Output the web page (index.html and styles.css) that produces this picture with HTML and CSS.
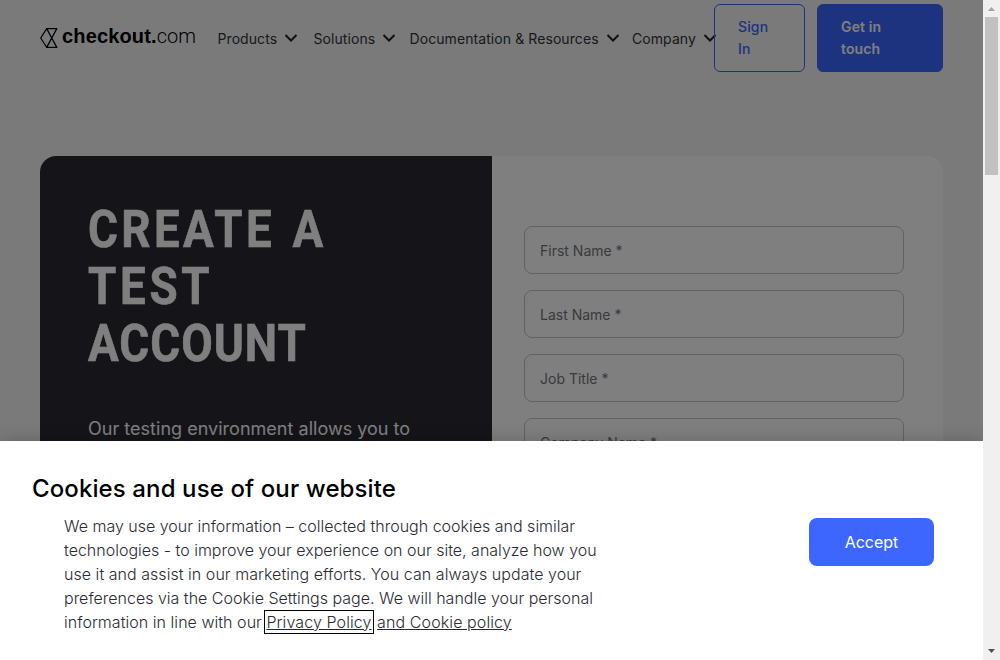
FILE: index.html
```html
<!DOCTYPE html>
<html lang="en">
<head>
<meta charset="utf-8">
<title>Create a test account | Checkout.com</title>
<link rel="stylesheet" href="styles.css">
</head>
<body>
<div class="page">
  <header class="header">
    <a class="logo">
      <svg class="logo-mark" width="18" height="20" viewBox="0 0 18 20" fill="none" stroke="#000" stroke-width="1.2" stroke-linejoin="round"><path d="M6.7 .6H16.8L6.7 19.4H16.8L6.7 .6L.7 10L6.7 19.4"/></svg>
      <span class="logo-text"><b>checkout.</b><span class="logo-com">com</span></span>
    </a>
    <nav class="nav">
      <a class="nav-item nav-products"><span>Products</span><svg class="chevron" viewBox="0 0 12 8"><path d="M.5 1L6 6.500L11.500 1"/></svg></a>
      <a class="nav-item nav-solutions"><span>Solutions</span><svg class="chevron" viewBox="0 0 12 8"><path d="M.5 1L6 6.500L11.500 1"/></svg></a>
      <a class="nav-item nav-docs"><span>Documentation &amp; Resources</span><svg class="chevron" viewBox="0 0 12 8"><path d="M.5 1L6 6.500L11.500 1"/></svg></a>
      <a class="nav-item nav-company"><span>Company</span><svg class="chevron" viewBox="0 0 12 8"><path d="M.5 1L6 6.500L11.500 1"/></svg></a>
    </nav>
    <div class="actions">
      <a class="btn btn-outline">Sign<br>In</a>
      <a class="btn btn-solid">Get in<br>touch</a>
    </div>
  </header>
  <main class="card">
    <section class="intro">
      <h1 class="title"><span class="line line-1">CREATE A</span><span class="line line-2">TEST</span><span class="line line-3">ACCOUNT</span></h1>
      <p class="lead">Our testing environment allows you to</p>
    </section>
    <form class="form">
      <div class="field">First Name *</div>
      <div class="field">Last Name *</div>
      <div class="field">Job Title *</div>
      <div class="field">Company Name *</div>
    </form>
  </main>
  <div class="overlay"></div>
  <section class="banner">
    <div class="banner-copy">
      <h2 class="banner-title">Cookies and use of our website</h2>
      <p class="banner-text">We may use your information – collected through cookies and similar<br>technologies - to improve your experience on our site, analyze how you<br><span class="loose">use it and assist in our marketing efforts. You can always update your</span><br>preferences via the Cookie Settings page. We will handle your personal<br><span class="loose">information in line with our <a class="link link-focus">Privacy Policy</a> <a class="link">and Cookie policy</a></span></p>
    </div>
    <button class="accept">Accept</button>
  </section>
</div>
<div class="scrollbar">
  <svg class="arrow" viewBox="0 0 17 17"><path fill="#a3a3a3" d="M5 11h7L8.500 7z"/></svg>
  <div class="thumb"></div>
  <svg class="arrow arrow-down" viewBox="0 0 17 17"><path fill="#505050" d="M5 6h7L8.500 10z"/></svg>
</div>
</body>
</html>
```
FILE: styles.css
```css
* { box-sizing: border-box; }
body { margin: 0; width: 1000px; height: 660px; display: flex; overflow: hidden; font-family: Inter, "Liberation Sans", sans-serif; }
.page { position: relative; width: 983px; height: 660px; overflow: hidden; background: #f4f4f4; }
.header { display: flex; height: 156px; padding: 4px 40px 0; align-items: flex-start; }
.logo { display: flex; width: 177.500px; padding-top: 24px; }
.logo-mark { flex: none; margin-right: 4px; }
.logo-text { display: block; font: 20px/20px "Liberation Sans", sans-serif; white-space: nowrap; margin-top: -2px; letter-spacing: .15px; }
.logo-com { font-family: Roboto, sans-serif; font-weight: 300; letter-spacing: 0; }
.nav { display: flex; width: 496.500px; padding-top: 23px; }
.nav-item { display: flex; flex: none; align-items: center; height: 22px; font-size: 14px; letter-spacing: .08px; color: #33333a; white-space: nowrap; }
.nav-products { width: 96px; }
.nav-solutions { width: 96px; }
.nav-docs { width: 222.500px; }
.nav-company { width: 86px; }
.chevron { width: 12px; height: 8px; flex: none; margin-left: 8px; fill: none; stroke: #222; stroke-width: 2; overflow: visible; }
.actions { display: flex; gap: 12px; }
.btn { height: 68px; padding: 11px 23px; border: 1px solid #3c66ff; border-radius: 6px; font-size: 14px; line-height: 22px; letter-spacing: .14px; }
.btn-outline { width: 91px; color: #3c66ff; font-weight: 500; }
.btn-solid { width: 126px; color: #fff; background: #3c66ff; font-weight: 600; }
.card { display: flex; width: 903px; height: 504px; margin-left: 40px; background: #fff; border-radius: 16px 16px 0 0; overflow: hidden; }
.intro { width: 452px; padding: 45px 48px; background: #2b2a33; color: #fff; }
.title { margin: 0; font: 700 52px/57px Roboto, sans-serif; }
.line { display: block; width: max-content; transform: scaleX(.88); transform-origin: left; -webkit-text-stroke: .6px #fff; }
.line-1 { letter-spacing: 3.800px; word-spacing: 3px; }
.line-2 { letter-spacing: 4.200px; }
.line-3 { letter-spacing: 1.100px; }
.lead { margin: 43px 0 0; font-size: 18px; line-height: 28px; letter-spacing: .02px; white-space: nowrap; }
.form { display: flex; flex-direction: column; gap: 16px; width: 412px; padding: 70px 0 0 32px; }
.field { width: 380px; height: 48px; padding: 0 15px; border: 1px solid #c4c4c4; border-radius: 8px; font-size: 14px; line-height: 48px; letter-spacing: 0; color: #74747a; }
.overlay { position: absolute; inset: 0; background: rgba(0,0,0,.5); }
.banner { position: absolute; left: 0; right: 0; bottom: 0; height: 219px; display: flex; padding: 32px; background: #fff; box-shadow: 0 0 18px rgba(0,0,0,.2); }
.banner-copy { width: 777px; }
.banner-title { margin: 0; font-size: 24px; font-weight: 500; line-height: 32px; letter-spacing: .11px; color: #000; }
.banner-text { margin: 9px 0 0 32px; font-size: 16px; font-weight: 300; line-height: 24px; color: #2b2a33; white-space: nowrap; }
.loose { letter-spacing: .04px; }
.link { color: #2b2a33; letter-spacing: .1px; text-decoration: underline; }
.link-focus { margin-right: 1px; outline: 1px solid #000; outline-offset: 1px; }
.accept { width: 125px; height: 48px; margin-top: 44.500px; padding: 0; border: 0; border-radius: 8px; background: #3c66ff; color: #fff; font: 16px/24px Inter, sans-serif; transform: translateY(0); }
.scrollbar { display: flex; flex-direction: column; width: 17px; height: 660px; background: #f0f0f0; }
.arrow { display: block; width: 17px; height: 17px; }
.thumb { width: 13px; height: 158px; margin-left: 2px; background: #c1c1c1; }
.arrow-down { margin-top: auto; }
```
